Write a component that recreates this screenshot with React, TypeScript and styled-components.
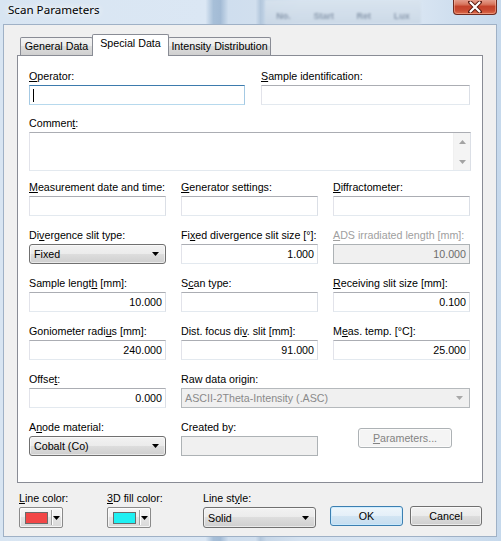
import React from 'react';
import styled, { createGlobalStyle } from 'styled-components';

const Global = createGlobalStyle`
  html, body { margin: 0; padding: 0; background: #fff; }
  body {
    width: 501px; height: 541px; overflow: hidden;
    font-family: "Liberation Sans", Arial, sans-serif;
    font-size: 10.7px; color: #000;
  }
  * { box-sizing: border-box; }
`;

const Window = styled.div`
  position: relative;
  width: 501px;
  height: 541px;
  display: flex;
  flex-direction: column;
  padding: 0 4px 4px 3px;
  overflow: hidden;
  background: linear-gradient(
    90deg,
    #d8e5f2 0%,
    #dbe7f4 41%,
    #a7bfd8 42.6%,
    #a3bbd5 44%,
    #cfdeee 45.6%,
    #d1dfee 51%,
    #b3c7dc 52%,
    #c7d7e8 53.2%,
    #d6e3f1 60%,
    #dae6f3 82%,
    #d0dfef 90%,
    #c6d9ec 100%
  );
`;

const TitleBar = styled.div`
  position: relative;
  height: 24px;
  flex: none;
  display: flex;
  align-items: flex-start;
  padding-left: 5px;
`;

const GhostText = styled.div`
  position: absolute;
  left: 262px;
  top: 0;
  width: 156px;
  height: 24px;
  background: linear-gradient(#d9e4ef, #cbd8e6);
  filter: blur(1.3px);
  opacity: 0.85;
  display: flex;
  align-items: center;
  justify-content: space-around;
  padding-top: 8px;
  font-size: 9px;
  font-weight: bold;
  color: rgba(40, 60, 90, 0.5);
  pointer-events: none;
`;

const TitleText = styled.div`
  position: relative;
  margin-top: 2px;
  font-family: "Noto Sans", "Open Sans", sans-serif;
  font-size: 11.6px;
  line-height: 16px;
  color: #000;
  text-shadow: 0 0 6px #fff, 0 0 10px rgba(255, 255, 255, 0.9);
`;

const CloseButton = styled.div`
  position: relative;
  margin-left: auto;
  width: 44px;
  height: 16px;
  margin-top: -1px;
  border: 1px solid #6f2a1f;
  border-top: none;
  border-radius: 0 0 4px 4px;
  background: linear-gradient(#e7a595 0%, #d8775f 35%, #c4432b 50%, #c94a31 75%, #dc6c4a 100%);
  box-shadow: inset 0 0 0 1px rgba(255, 200, 180, 0.45);
  display: flex;
  align-items: center;
  justify-content: center;
`;

const Client = styled.div`
  flex: 1;
  background: #f0f0f0;
  border: 1px solid #9fb1c6;
  display: flex;
  flex-direction: column;
`;

const TabControl = styled.div`
  margin: 9px 0 0 13px;
  width: 466px;
  display: flex;
  flex-direction: column;
`;

const TabStrip = styled.div`
  position: relative;
  z-index: 2;
  height: 21px;
  display: flex;
  align-items: flex-end;
  padding-left: 3px;
`;

const Tab = styled.div<{ $active?: boolean; $w: number }>`
  width: ${(p) => p.$w}px;
  height: ${(p) => (p.$active ? 22 : 18)}px;
  margin-bottom: ${(p) => (p.$active ? -1 : 0)}px;
  margin-left: -1px;
  &:first-child { margin-left: 0; }
  border: 1px solid #898c95;
  border-bottom: none;
  border-radius: 2px 2px 0 0;
  background: ${(p) =>
    p.$active ? '#fff' : 'linear-gradient(#f3f3f3 0%, #ebebeb 50%, #dddddd 50%, #d0d0d0 100%)'};
  position: relative;
  z-index: ${(p) => (p.$active ? 2 : 1)};
  display: flex;
  justify-content: center;
  line-height: 17px;
  white-space: nowrap;
`;

const Panel = styled.div`
  height: 428px;
  background: #fff;
  border: 1px solid #898c95;
  padding: 14px 11px 0 11px;
  display: flex;
  flex-direction: column;
`;

const TopRow = styled.div`
  display: flex;
  gap: 16px;
`;

const FieldWrap = styled.div<{ $w?: number; $mt?: number; $span?: number }>`
  display: flex;
  flex-direction: column;
  ${(p) => (p.$w ? `width: ${p.$w}px;` : '')}
  ${(p) => (p.$mt ? `margin-top: ${p.$mt}px;` : '')}
  ${(p) => (p.$span ? `grid-column: span ${p.$span};` : '')}
`;

const Label = styled.div<{ $disabled?: boolean }>`
  height: 13px;
  line-height: 13px;
  margin-bottom: 2px;
  white-space: nowrap;
  color: ${(p) => (p.$disabled ? '#a0a0a0' : '#000')};
  u { text-underline-offset: 1px; }
`;

const EditBox = styled.div<{ $disabled?: boolean; $focused?: boolean }>`
  height: 20px;
  border: 1px solid;
  border-color: ${(p) =>
    p.$focused
      ? '#3d7bad #a4c9e3 #b7d9ed #a4c9e3'
      : p.$disabled
      ? '#adb2b5'
      : '#abadb3 #dbdfe6 #e3e9ef #e2e3ea'};
  background: ${(p) => (p.$disabled ? '#f0f0f0' : '#fff')};
  color: ${(p) => (p.$disabled ? '#6d6d6d' : '#000')};
  display: flex;
  align-items: center;
  justify-content: flex-end;
  padding: 0 3px 0 3px;
  line-height: 18px;
  white-space: nowrap;
`;

const Caret = styled.span`
  width: 1px;
  height: 13px;
  background: #000;
  margin-right: auto;
`;

const MemoBox = styled.div`
  height: 39px;
  border: 1px solid;
  border-color: #abadb3 #dbdfe6 #e3e9ef #e2e3ea;
  background: #fff;
  display: flex;
  justify-content: flex-end;
`;

const ScrollBar = styled.div`
  width: 17px;
  background: #f4f4f4;
  border-left: 1px solid #f0f0f0;
  display: flex;
  flex-direction: column;
  justify-content: space-between;
`;

const ScrollArrow = styled.div`
  height: 17px;
  display: flex;
  align-items: center;
  justify-content: center;
`;

const Combo = styled.div<{ $h?: number }>`
  height: ${(p) => p.$h ?? 20}px;
  border: 1px solid #707070;
  border-radius: 3px;
  background: linear-gradient(#f2f2f2 0%, #ebebeb 50%, #dddddd 50%, #cfcfcf 100%);
  box-shadow: inset 0 0 0 1px rgba(255, 255, 255, 0.55);
  display: flex;
  align-items: center;
  padding: 0 6px 0 4px;
  white-space: nowrap;
`;

const FlatCombo = styled.div`
  height: 20px;
  border: 1px solid #b5b9bc;
  background: #f0f0f0;
  color: #8a8a8a;
  display: flex;
  align-items: center;
  padding: 0 6px 0 3px;
  white-space: nowrap;
`;

const ComboText = styled.span`
  flex: 1;
`;

const Grid = styled.div`
  margin-top: 10px;
  display: grid;
  grid-template-columns: 137px 137px 137px;
  column-gap: 15px;
  row-gap: 13px;
`;

const ButtonCell = styled.div`
  padding: 7px 0 0 25px;
`;

const PushButton = styled.div<{ $w: number; $h?: number; $default?: boolean; $disabled?: boolean; $mb?: number }>`
  width: ${(p) => p.$w}px;
  height: ${(p) => p.$h ?? 20}px;
  margin-bottom: ${(p) => p.$mb ?? 0}px;
  border: 1px solid ${(p) => (p.$default ? '#3c7fb1' : p.$disabled ? '#adb2b5' : '#707070')};
  border-radius: 3px;
  background: ${(p) =>
    p.$disabled
      ? '#f4f4f4'
      : p.$default
      ? 'linear-gradient(#eef6fb 0%, #e4eff8 50%, #d2e5f3 50%, #c6ddef 100%)'
      : 'linear-gradient(#f2f2f2 0%, #ebebeb 50%, #dddddd 50%, #cfcfcf 100%)'};
  box-shadow: inset 0 0 0 1px ${(p) => (p.$default ? 'rgba(200,235,255,0.8)' : 'rgba(255,255,255,0.6)')};
  color: ${(p) => (p.$disabled ? '#838383' : '#000')};
  display: flex;
  align-items: center;
  justify-content: center;
  white-space: nowrap;
  u { text-underline-offset: 1px; }
`;

const BottomRow = styled.div`
  margin-top: 9px;
  padding-left: 15px;
  display: flex;
  align-items: flex-end;
`;

const BottomField = styled.div<{ $ml?: number; $w: number }>`
  display: flex;
  flex-direction: column;
  flex: none;
  width: ${(p) => p.$w}px;
  margin-left: ${(p) => p.$ml ?? 0}px;
`;

const ColorButton = styled.div`
  width: 44px;
  height: 21px;
  border: 1px solid #8a8a8a;
  border-radius: 2px;
  background: linear-gradient(#f7f7f7 0%, #efefef 50%, #e3e3e3 50%, #d9d9d9 100%);
  box-shadow: inset 0 0 0 1px rgba(255, 255, 255, 0.7);
  display: flex;
  align-items: center;
  padding-left: 5px;
`;

const Swatch = styled.div<{ $c: string }>`
  width: 23px;
  height: 12px;
  background: ${(p) => p.$c};
  border: 1px solid #6b6b6b;
`;

const SplitDivider = styled.div`
  width: 2px;
  height: 15px;
  margin-left: 3px;
  border-left: 1px solid #a0a0a0;
  border-right: 1px solid #fff;
`;

const SplitArrow = styled.div`
  flex: 1;
  display: flex;
  justify-content: center;
  padding-right: 2px;
`;

const ButtonsGroup = styled.div`
  margin-left: 14px;
  display: flex;
  gap: 7px;
`;

const DownArrow = ({ color = '#000' }: { color?: string }) => (
  <svg width="7" height="4" viewBox="0 0 7 4">
    <polygon points="0,0 7,0 3.5,4" fill={color} />
  </svg>
);

const Mn = ({ text, u }: { text: string; u?: number }) => {
  if (u === undefined || u < 0) return <>{text}</>;
  return (
    <>
      {text.slice(0, u)}
      <u>{text[u]}</u>
      {text.slice(u + 1)}
    </>
  );
};

type FieldProps = {
  label: string;
  u?: number;
  disabledLabel?: boolean;
  children: React.ReactNode;
  w?: number;
  mt?: number;
  span?: number;
};

const Field = ({ label, u, disabledLabel, children, w, mt, span }: FieldProps) => (
  <FieldWrap $w={w} $mt={mt} $span={span}>
    <Label $disabled={disabledLabel}>
      <Mn text={label} u={u} />
    </Label>
    {children}
  </FieldWrap>
);

const ComboBox = ({ value, h }: { value: string; h?: number }) => (
  <Combo $h={h}>
    <ComboText>{value}</ComboText>
    <DownArrow />
  </Combo>
);

export default function App() {
  return (
    <>
      <Global />
      <Window>
        <TitleBar>
          <GhostText>
            <span>No.</span>
            <span>Start</span>
            <span>Ret</span>
            <span>Lux</span>
          </GhostText>
          <TitleText>Scan Parameters</TitleText>
          <CloseButton>
            <svg width="14" height="12" viewBox="0 0 14 12">
              <path d="M2 1 L12 11 M12 1 L2 11" stroke="#5a1a10" strokeWidth="4" strokeLinecap="round" />
              <path d="M2.5 1.5 L11.5 10.5 M11.5 1.5 L2.5 10.5" stroke="#fff" strokeWidth="2.2" strokeLinecap="round" />
            </svg>
          </CloseButton>
        </TitleBar>
        <Client>
          <TabControl>
            <TabStrip>
              <Tab $w={73}>General Data</Tab>
              <Tab $w={77} $active>
                Special Data
              </Tab>
              <Tab $w={103}>Intensity Distribution</Tab>
            </TabStrip>
            <Panel>
              <TopRow>
                <Field label="Operator:" u={0} w={216}>
                  <EditBox $focused>
                    <Caret />
                  </EditBox>
                </Field>
                <Field label="Sample identification:" u={0} w={209}>
                  <EditBox />
                </Field>
              </TopRow>
              <Field label="Comment:" u={6} mt={12}>
                <MemoBox>
                  <ScrollBar>
                    <ScrollArrow>
                      <svg width="7" height="4" viewBox="0 0 7 4">
                        <polygon points="0,4 7,4 3.5,0" fill="#a3a3a3" />
                      </svg>
                    </ScrollArrow>
                    <ScrollArrow>
                      <DownArrow color="#a3a3a3" />
                    </ScrollArrow>
                  </ScrollBar>
                </MemoBox>
              </Field>
              <Grid>
                <Field label="Measurement date and time:" u={0}>
                  <EditBox />
                </Field>
                <Field label="Generator settings:" u={0}>
                  <EditBox />
                </Field>
                <Field label="Diffractometer:" u={0}>
                  <EditBox />
                </Field>

                <Field label="Divergence slit type:" u={2}>
                  <ComboBox value="Fixed" />
                </Field>
                <Field label="Fixed divergence slit size [°]:" u={2}>
                  <EditBox>1.000</EditBox>
                </Field>
                <Field label="ADS irradiated length [mm]:" u={0} disabledLabel>
                  <EditBox $disabled>10.000</EditBox>
                </Field>

                <Field label="Sample length [mm]:" u={12}>
                  <EditBox>10.000</EditBox>
                </Field>
                <Field label="Scan type:" u={1}>
                  <EditBox />
                </Field>
                <Field label="Receiving slit size [mm]:" u={0}>
                  <EditBox>0.100</EditBox>
                </Field>

                <Field label="Goniometer radius [mm]:" u={15}>
                  <EditBox>240.000</EditBox>
                </Field>
                <Field label="Dist. focus div. slit [mm]:" u={14}>
                  <EditBox>91.000</EditBox>
                </Field>
                <Field label="Meas. temp. [°C]:" u={1}>
                  <EditBox>25.000</EditBox>
                </Field>

                <Field label="Offset:" u={5}>
                  <EditBox>0.000</EditBox>
                </Field>
                <Field label="Raw data origin:" span={2}>
                  <FlatCombo>
                    <ComboText>ASCII-2Theta-Intensity (.ASC)</ComboText>
                    <DownArrow color="#a8a8a8" />
                  </FlatCombo>
                </Field>

                <Field label="Anode material:" u={1}>
                  <ComboBox value="Cobalt (Co)" />
                </Field>
                <Field label="Created by:">
                  <EditBox $disabled />
                </Field>
                <ButtonCell>
                  <PushButton $w={94} $disabled>
                    <Mn text="Parameters..." u={0} />
                  </PushButton>
                </ButtonCell>
              </Grid>
            </Panel>
          </TabControl>
          <BottomRow>
            <BottomField $w={44}>
              <Label>
                <Mn text="Line color:" u={0} />
              </Label>
              <ColorButton>
                <Swatch $c="#f24747" />
                <SplitDivider />
                <SplitArrow>
                  <DownArrow />
                </SplitArrow>
              </ColorButton>
            </BottomField>
            <BottomField $w={44} $ml={44}>
              <Label>
                <Mn text="3D fill color:" u={0} />
              </Label>
              <ColorButton>
                <Swatch $c="#1ff0f2" />
                <SplitDivider />
                <SplitArrow>
                  <DownArrow />
                </SplitArrow>
              </ColorButton>
            </BottomField>
            <BottomField $w={113} $ml={52}>
              <Label>
                <Mn text="Line style:" u={7} />
              </Label>
              <ComboBox value="Solid" h={21} />
            </BottomField>
            <ButtonsGroup>
              <PushButton $w={73} $default $mb={2}>
                OK
              </PushButton>
              <PushButton $w={72} $mb={2}>
                Cancel
              </PushButton>
            </ButtonsGroup>
          </BottomRow>
        </Client>
      </Window>
    </>
  );
}
